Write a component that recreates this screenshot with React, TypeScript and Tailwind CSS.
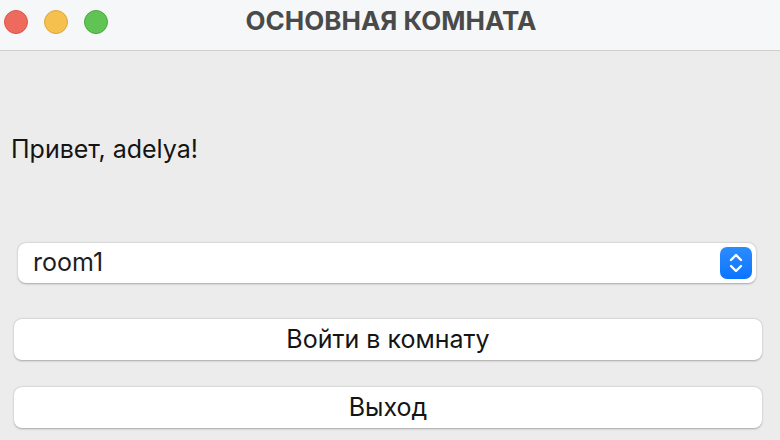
import React from "react";

export default function App() {
  return (
    <div className="w-[780px] h-[440px] bg-[#ececec] overflow-hidden flex flex-col" style={{ fontFamily: 'Inter, "Liberation Sans", Arial, sans-serif' }}>
      <div className="h-[51px] bg-[#f6f7f9] border-b border-[#cfcfcf] flex items-center relative shrink-0">
        <div className="absolute left-[4px] top-[10px] flex gap-[16px]">
          <div className="w-[24px] h-[24px] rounded-full bg-[#ef6a5e] border border-[#d8574b]" />
          <div className="w-[24px] h-[24px] rounded-full bg-[#f6c04f] border border-[#dea63a]" />
          <div className="w-[24px] h-[24px] rounded-full bg-[#5fc454] border border-[#4aa93f]" />
        </div>
        <div className="w-full text-center text-[26px] leading-[30px] font-bold text-[#4a4a4a] -mt-[9px] pl-[2px]">ОСНОВНАЯ КОМНАТА</div>
      </div>
      <div className="flex flex-col">
        <div className="mt-[83px] ml-[11px] text-[25px] leading-[30px] text-[#141414]">Привет, adelya!</div>
        <div className="mt-[79px] ml-[18px] w-[738px] h-[40px] bg-white rounded-[8px] shadow-[0_0.5px_2px_rgba(0,0,0,0.3)] flex items-center justify-between pl-[15px] pr-[4px]">
          <span className="text-[25px] text-[#1e1e1e]">room1</span>
          <div className="w-[32px] h-[32px] rounded-[7px] bg-gradient-to-b from-[#2a8cff] to-[#0a74ff] flex items-center justify-center">
            <svg width="16" height="22" viewBox="0 0 16 22" fill="none" stroke="white" strokeWidth="2.4" strokeLinecap="round" strokeLinejoin="round">
              <path d="M3 8 L8 3 L13 8" />
              <path d="M3 14 L8 19 L13 14" />
            </svg>
          </div>
        </div>
        <div className="mt-[36px] ml-[14px] w-[748px] h-[41px] bg-white rounded-[8px] shadow-[0_0.5px_2px_rgba(0,0,0,0.3)] flex items-center justify-center text-[25px] text-[#141414]">Войти в комнату</div>
        <div className="mt-[27px] ml-[14px] w-[748px] h-[41px] bg-white rounded-[8px] shadow-[0_0.5px_2px_rgba(0,0,0,0.3)] flex items-center justify-center text-[25px] text-[#141414]">Выход</div>
      </div>
    </div>
  );
}
